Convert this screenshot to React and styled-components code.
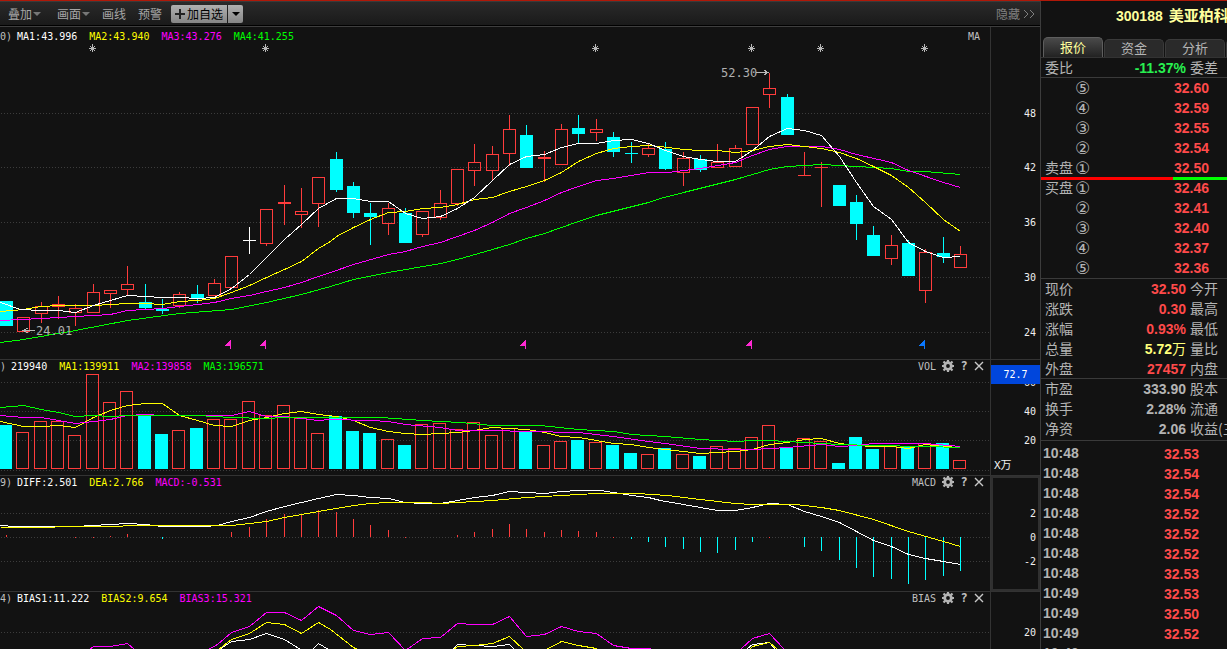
import React from "react";
import styled, { createGlobalStyle } from "styled-components";

const RED = "#ff3c3c";
const CYAN = "#00ffff";
const MAGENTA = "#ff00ff";
const YELLOW = "#ffff00";
const GREEN = "#00ff00";
const MONO = '"DejaVu Sans Mono", "Noto Sans CJK SC", monospace';
const CJK = '"Noto Sans CJK SC", sans-serif';
const BOLD = '"Liberation Sans", "Noto Sans CJK SC", sans-serif';

const GlobalStyle = createGlobalStyle`
  * { box-sizing: border-box; }
  body { margin: 0; background: #121212; overflow: hidden; }
  button { border: 0; padding: 0; background: none; color: inherit; font: inherit; cursor: pointer; }
  table { border-collapse: collapse; table-layout: fixed; width: 100%; }
`;

const Screen = styled.div`
  height: 100vh;
  display: flex;
  flex-direction: column;
  overflow: hidden;
  background: #121212;
  border-top: 1px solid #b01808;
  font-family: ${CJK};
`;

const Body = styled.div`
  flex: 1;
  min-height: 0;
  display: flex;
`;

const ChartColumn = styled.main`
  flex: 1;
  min-width: 0;
  overflow: hidden;
  border-right: 1px solid #3c3c3c;
`;

/* ---------- toolbar ---------- */

const Toolbar = styled.nav`
  height: 26px;
  display: flex;
  align-items: center;
  gap: 9px;
  padding: 0 5px 1px 8px;
  border-top: 1px solid #3a3a3a;
  border-bottom: 1px solid #3e3e3e;
  box-shadow: inset 0 -1px 0 #000;
  background: linear-gradient(#2a2a2a, #191919);
  color: #a6a6a6;
  font-size: 12px;
  line-height: 18px;
`;

const ToolGroup = styled.div`
  display: flex;
  gap: ${(p) => p.$gap}px;
`;

const ToolButton = styled.button`
  display: flex;
  align-items: center;
  padding-right: ${(p) => (p.$menu ? 3 : 0)}px;
  white-space: nowrap;
`;

const Caret = styled.span`
  margin-left: ${(p) => (p.$dark ? 0 : 1)}px;
  border: 4px solid transparent;
  border-top-color: ${(p) => (p.$dark ? "#000" : "#777")};
  border-bottom-width: 0;
`;

const AddGroup = styled.div`
  display: flex;
  gap: 1px;
`;

const AddButton = styled.button`
  height: 18px;
  width: ${(p) => p.$width}px;
  display: flex;
  align-items: center;
  justify-content: center;
  gap: 2px;
  border-radius: ${(p) => (p.$end ? "0 2px 2px 0" : "2px 0 0 2px")};
  background: linear-gradient(#b0b0b0, #868686);
  color: #000;
`;

const HideButton = styled.button`
  margin-left: auto;
  display: flex;
  align-items: center;
  gap: 3px;
  color: #808080;
`;

/* ---------- chart panels ---------- */

const Panel = styled.section`
  height: ${(p) => p.$height}px;
  display: grid;
  grid-template-columns: minmax(0, 1fr) 50px;
  border-top: ${(p) => (p.$first ? 0 : 1)}px solid #333;
`;

const Plot = styled.div`
  position: relative;
  min-width: 0;
`;

const PlotSvg = styled.svg`
  display: block;
  width: 100%;
  height: 100%;
`;

const Axis = styled.div`
  position: relative;
  border-left: 1px solid #333;
  box-shadow: ${(p) => (p.$active ? "inset 0 0 0 2px #303030" : "none")};
`;

const AxisText = styled.text`
  font: 10px ${MONO};
  fill: #f0f0f0;
  text-anchor: end;
`;

const PriceTag = styled.div`
  position: absolute;
  inset: 5px 0 auto 0;
  height: 19px;
  background: #0046dc;
  color: #fff;
  font: 10px/19px ${MONO};
  text-align: center;
`;

const Unit = styled.div`
  position: absolute;
  left: 3px;
  bottom: 0;
  color: #f0f0f0;
  font: 11px/18px ${MONO};
`;

const PanelHead = styled.header`
  position: absolute;
  inset: ${(p) => (p.$first ? 3 : 0)}px 0 auto 0;
  height: 13px;
  padding-right: ${(p) => (p.$first ? 10 : 6)}px;
  display: flex;
  align-items: center;
  color: #c0c0c0;
  font: 10px/13px ${MONO};
  white-space: nowrap;
`;

const Readouts = styled.div`
  display: flex;
  gap: 12px;
  margin-left: 5px;
`;

const Readout = styled.span`
  color: ${(p) => p.$color};
`;

const PanelTools = styled.div`
  margin-left: auto;
  display: flex;
  align-items: flex-start;
  gap: 6px;
`;

const IconButton = styled.button`
  width: ${(p) => p.$width}px;
  height: 12px;
  display: flex;
  align-items: center;
  justify-content: center;
  font: bold 12px/12px ${MONO};
`;

const Callout = styled.span`
  position: absolute;
  color: #b0b0b0;
  font: 12px/14px ${MONO};
`;

/* ---------- quote panel ---------- */

const QuotePanel = styled.aside`
  width: 186px;
  flex: none;
  overflow: hidden;
  color: #b4b4b4;
  font-size: 14px;
`;

const Title = styled.h1`
  margin: 0;
  height: 35px;
  padding: 4px 0 0 75px;
  display: flex;
  gap: 6px;
  color: #ffff9c;
  font: bold 14px/22px ${BOLD};
  white-space: nowrap;
`;

const StockName = styled.span`
  font-size: 15px;
`;

const Tabs = styled.div`
  display: flex;
  align-items: flex-end;
  gap: 1px;
  height: 22px;
  padding-left: 2px;
  border-bottom: 1px solid #333;
`;

const Tab = styled.button`
  flex: none;
  width: 60px;
  height: ${(p) => (p.$active ? 20 : 18)}px;
  padding-bottom: 2px;
  border: 1px solid ${(p) => (p.$active ? "#5e5e5e" : "#3a3a3a")};
  border-bottom: 0;
  border-radius: 5px 5px 0 0;
  background: ${(p) => (p.$active ? "linear-gradient(#4a4a4a, #222)" : "#2a2a2a")};
  color: ${(p) => (p.$active ? "#ffff9c" : "#b4b4b4")};
  font-size: 13px;
  line-height: 15px;
`;

const Section = styled.div`
  padding: ${(p) => p.$top || 0}px 0 ${(p) => p.$bottom || 0}px;
  background: linear-gradient(#3a3a3a, #3a3a3a) bottom / 100% ${(p) => (p.$last ? 0 : 1)}px no-repeat;
`;

const Row = styled.tr`
  height: 20px;
`;

const Label = styled.th`
  width: ${(p) => p.$width};
  padding: 0 0 2px 4px;
  overflow: hidden;
  font-weight: normal;
  line-height: 18px;
  text-align: left;
  white-space: nowrap;
`;

const Value = styled.td`
  width: ${(p) => p.$width};
  padding: 0 ${(p) => p.$right || 0}px 0 0;
  color: ${(p) => p.$color || "#ff4a4a"};
  font: bold 14px/18px ${BOLD};
  text-align: right;
  white-space: nowrap;
`;

const Plain = styled.span`
  font-weight: normal;
`;

const Level = styled.td`
  padding: 0 0 0 1px;
  font: 17px/18px "DejaVu Sans", sans-serif;
`;

const Time = styled.th`
  padding: 0 0 2px 2px;
  font: bold 14px/18px ${BOLD};
  text-align: left;
`;

const Ratio = styled.div`
  position: relative;
  display: flex;
  height: 3px;
  margin: -1px 0 -2px;
  background: #00ff00;
`;

const RatioFill = styled.div`
  width: 132px;
  background: #ff0000;
`;

/* ---------- data ---------- */

const CX = [
  6, 23, 41, 58, 75, 93, 110, 127, 145, 162, 179, 197, 214, 231, 249, 266, 284, 301, 318,
  336, 353, 370, 388, 405, 422, 440, 457, 474, 492, 509, 526, 544, 561, 578, 596, 613, 631, 648,
  665, 683, 700, 717, 735, 752, 769, 787, 804, 821, 839, 856, 873, 891, 908, 925, 943, 960,
];

/* kind (u up, d down, x flat), high, body top, body bottom, low, volume top */
const BARS = [
  ["d", 301, 301, 326, 326, 425], ["u", 317, 317, 332, 332, 432], ["u", 302, 306, 314, 323, 421],
  ["u", 296, 304, 307, 319, 421], ["u", 304, 308, 313, 326, 435], ["u", 284, 292, 313, 313, 374],
  ["u", 290, 290, 294, 308, 402], ["u", 266, 284, 290, 295, 391], ["d", 284, 302, 308, 309, 415],
  ["d", 299, 309, 311, 314, 434], ["u", 292, 294, 306, 308, 430], ["d", 285, 294, 299, 303, 428],
  ["u", 279, 283, 296, 296, 419], ["u", 256, 256, 288, 288, 419], ["x", 227, 240, 241, 254, 401],
  ["u", 209, 209, 244, 246, 415], ["u", 185, 202, 204, 225, 405], ["u", 188, 211, 215, 228, 418],
  ["u", 177, 177, 204, 227, 433], ["d", 152, 159, 190, 192, 416], ["d", 182, 186, 213, 218, 431],
  ["d", 203, 213, 217, 245, 433], ["u", 203, 208, 224, 235, 439], ["d", 208, 213, 243, 243, 445],
  ["u", 211, 211, 235, 237, 424], ["u", 190, 203, 218, 220, 423], ["u", 169, 169, 204, 206, 429],
  ["u", 144, 162, 171, 186, 422], ["u", 146, 154, 171, 180, 435], ["u", 115, 129, 154, 166, 428],
  ["d", 125, 135, 168, 168, 431], ["u", 151, 157, 159, 182, 445], ["u", 124, 129, 165, 165, 441],
  ["d", 115, 128, 134, 143, 440], ["u", 119, 129, 133, 141, 442], ["d", 132, 137, 152, 157, 445],
  ["d", 142, 153, 154, 163, 453], ["u", 143, 148, 155, 157, 454], ["d", 142, 149, 169, 170, 448],
  ["u", 152, 158, 173, 186, 454], ["d", 155, 159, 170, 172, 456], ["u", 144, 162, 168, 168, 446],
  ["u", 145, 148, 167, 167, 448], ["u", 107, 107, 145, 145, 437], ["u", 73, 88, 95, 108, 425],
  ["d", 94, 97, 135, 135, 448], ["u", 152, 175, 176, 176, 438], ["u", 162, 167, 168, 207, 441],
  ["d", 185, 185, 206, 206, 463], ["d", 195, 202, 224, 240, 437], ["d", 226, 235, 256, 256, 449],
  ["u", 235, 245, 259, 265, 446], ["d", 240, 243, 276, 276, 447], ["u", 249, 252, 291, 303, 443],
  ["d", 237, 253, 257, 263, 443], ["u", 246, 254, 268, 268, 460],
];

const MA_LINES = [
  [GREEN, "0,342 23,339 75,330 127,320 179,313 231,309 266,302 301,294 330,286 353,279 388,272 440,263 457,259 492,249 509,244 526,238 544,233 578,221 596,215 648,202 660,198 683,192 735,179 769,169 787,166 821,164 839,165 891,168 908,171 925,171 960,174"],
  [MAGENTA, "0,320 41,318 75,316 110,314 127,310 162,308 179,306 197,304 214,302 231,298 249,295 266,291 284,287 301,282 318,276 330,272 353,264 388,254 405,251 422,246 440,242 474,230 492,222 509,213 526,207 544,200 561,192 578,186 596,180 613,178 648,172 667,172 700,168 735,162 752,155 769,149 787,146 821,146 839,149 856,154 891,162 908,170 943,182 960,187"],
  [YELLOW, "0,311 23,309 41,306 58,305 93,305 110,304 127,303 145,303 162,304 179,301 197,300 214,298 231,292 249,285 266,277 284,269 301,261 318,248 330,241 336,236 353,227 370,219 388,212 405,211 422,208 440,207 457,204 474,199 492,197 509,191 526,186 544,180 561,172 578,161 596,153 613,148 631,146 648,145 660,146 683,149 700,150 717,150 735,152 752,150 769,146 787,144 804,146 821,148 839,152 856,158 873,166 891,175 908,187 925,202 943,219 960,231"],
  ["#fff", "0,302 20,309 41,310 58,310 75,312 93,305 110,300 127,295 145,296 162,297 179,297 197,298 214,297 231,288 249,274 266,257 284,239 301,224 318,208 336,198 353,198 370,201 388,201 405,213 422,218 440,216 457,208 474,197 492,180 509,164 526,156 544,154 561,147 578,143 596,143 613,140 631,139 648,143 665,150 683,156 700,159 717,161 735,161 752,150 769,136 787,128 804,130 821,135 839,156 856,182 873,206 891,219 908,242 925,251 943,257 960,256"],
];

const VOL_LINES = [
  [YELLOW, "0,421 23,426 41,426 58,425 75,427 93,417 110,410 127,405 145,403 162,403 179,415 197,420 214,425 231,426 249,420 266,417 284,413 301,411 318,414 336,416 353,420 370,427 388,431 405,433 422,434 440,433 457,432 474,430 492,427 509,428 526,429 544,432 561,436 578,437 596,440 613,443 631,444 648,447 665,449 683,451 700,453 717,452 735,451 752,449 769,444 787,442 804,439 821,438 839,443 856,445 873,446 891,446 908,448 925,444 943,446 960,447"],
  [MAGENTA, "0,415 23,417 41,417 58,420 75,423 93,421 110,419 127,415 145,414 162,415 231,415 249,411 266,416 284,416 301,418 318,420 330,419 370,420 388,421 405,424 440,427 457,430 492,430 526,431 578,432 613,436 648,441 665,443 700,448 735,449 752,449 787,447 821,444 839,446 856,445 873,443 925,443 960,446"],
  [GREEN, "0,407 23,405 41,409 58,412 75,416 93,415 110,416 127,415 197,415 231,417 266,418 284,417 380,417 422,420 460,422 492,425 540,425 578,429 613,431 631,434 665,436 700,439 735,441 752,440 769,440 804,442 839,444 873,445 925,446 960,447"],
];

const MACD_LINES = [
  ["#fff", "0,525 15,526 75,526 127,523 145,524 162,526 205,526 217,525 231,521 249,517 266,511 284,506 301,502 318,498 336,494 353,495 370,497 388,498 405,502 422,503 440,503 457,500 474,497 492,495 509,491 526,492 544,493 561,491 578,490 600,490 613,492 631,495 648,497 660,500 683,504 700,507 717,510 735,510 752,507 769,503 787,504 804,511 821,516 839,522 856,531 873,540 891,546 908,554 925,558 943,561 960,564"],
  [YELLOW, "0,527 50,527 60,526 118,526 127,525 231,525 249,523 266,521 284,517 301,514 318,511 336,508 353,505 370,503 388,502 422,502 440,503 457,502 492,500 526,497 561,495 596,493 637,493 667,495 700,499 735,503 752,504 795,504 821,507 839,510 873,519 908,531 943,541 960,546"],
];

const MACD_BARS = [
  [6, 535], [75, 537], [93, 537], [110, 536], [127, 534], [162, 539], [231, 532], [249, 527], [266, 519],
  [284, 514], [301, 514], [318, 510], [336, 512], [353, 519], [370, 525], [388, 530], [405, 537],
  [457, 535], [474, 532], [492, 529], [509, 524], [526, 529], [544, 532], [561, 530], [578, 531],
  [596, 532], [613, 537], [631, 539], [648, 542], [665, 547], [683, 549], [700, 552], [717, 553],
  [735, 550], [752, 542], [769, 537], [804, 547], [821, 551], [839, 560], [856, 568], [873, 577],
  [891, 579], [908, 584], [925, 580], [943, 576], [960, 571],
];

const BIAS_LINES = [
  ["#fff", "219,649 231,641 249,639 266,633 284,639 300,649 312,649 318,643 328,649 340,660 440,660 452,649 457,644 474,645 492,646 509,644 514,649 530,660 730,660 746,649 752,644 769,642 775,649 785,660"],
  [YELLOW, "218,649 231,639 249,633 266,622 284,624 301,633 318,622 330,629 353,647 357,649 370,660 440,660 453,649 457,646 474,645 492,643 509,636 523,649 535,660 546,649 561,641 578,645 596,648 599,650 620,660 730,660 749,649 752,646 769,642 777,649 790,660"],
  [MAGENTA, "82,655 93,646 110,646 127,643 134,649 145,660 195,660 208,649 217,644 231,632 249,626 266,612 284,612 301,620 318,606 336,615 353,630 370,634 388,632 405,650 422,638 440,637 457,623 474,624 492,624 509,616 526,636 544,634 561,626 578,631 596,633 613,645 631,648 650,648 665,660 725,660 740,649 752,638 769,633 784,649 795,660"],
];

const PANELS = [
  {
    id: "price", top: 27, height: 332, name: "MA", prefix: "0)", ticks: [[113, "48"], [167, "42"], [222, "36"], [277, "30"], [332, "24"]],
    lines: MA_LINES,
    readouts: [["MA1:43.996", "#fff"], ["MA2:43.940", YELLOW], ["MA3:43.276", MAGENTA], ["MA4:41.255", GREEN]],
  },
  {
    id: "vol", top: 360, height: 116, name: "VOL", prefix: ")", ticks: [[382, "60"], [411, "40"], [440, "20"], [470, ""]],
    lines: VOL_LINES,
    readouts: [["219940", "#fff"], ["MA1:139911", YELLOW], ["MA2:139858", MAGENTA], ["MA3:196571", GREEN]],
  },
  {
    id: "macd", top: 476, height: 116, name: "MACD", prefix: "9)", ticks: [[513, "2"], [537, "0"], [561, "-2"]],
    lines: MACD_LINES,
    readouts: [["DIFF:2.501", "#fff"], ["DEA:2.766", YELLOW], ["MACD:-0.531", MAGENTA]],
  },
  {
    id: "bias", top: 592, height: 116, name: "BIAS", prefix: "4)", ticks: [[632, "20"]],
    lines: BIAS_LINES,
    readouts: [["BIAS1:11.222", "#fff"], ["BIAS2:9.654", YELLOW], ["BIAS3:15.321", MAGENTA]],
  },
];

const STARS = [92, 265, 595, 751, 820, 924];
const FLAGS = [[230, "#ff28d2"], [265, "#ff28d2"], [525, "#ff28d2"], [751, "#ff28d2"], [924, "#0a78ff"]];

const SELL = [["", "⑤", "32.60"], ["", "④", "32.59"], ["", "③", "32.55"], ["", "②", "32.54"], ["卖盘", "①", "32.50"]];
const BUY = [["买盘", "①", "32.46"], ["", "②", "32.41"], ["", "③", "32.40"], ["", "④", "32.37"], ["", "⑤", "32.36"]];
const QUOTE = [
  ["现价", "32.50", "今开"], ["涨跌", "0.30", "最高"], ["涨幅", "0.93%", "最低"],
  ["总量", "5.72", "量比", "#ffff7a", "万"], ["外盘", "27457", "内盘"],
];
const FUNDAMENTALS = [
  ["市盈", "333.90", "股本", "#b4b4b4"], ["换手", "2.28%", "流通", "#b4b4b4"], ["净资", "2.06", "收益(三)", "#b4b4b4"],
];
const TRADES = [
  ["10:48", "32.53"], ["10:48", "32.54"], ["10:48", "32.54"], ["10:48", "32.52"], ["10:48", "32.52"],
  ["10:48", "32.52"], ["10:48", "32.53"], ["10:49", "32.53"], ["10:49", "32.50"], ["10:49", "32.52"], ["10:49", "32.52"],
];

/* ---------- drawings ---------- */

function Box({ up, x, top, bottom }) {
  if (!up || bottom - top < 3) {
    return <rect x={x} y={top} width="13" height={bottom - top} fill={up ? RED : CYAN} />;
  }
  return <rect x={x + 0.5} y={top + 0.5} width="12" height={bottom - top - 1} fill="none" stroke={RED} />;
}

function Candle({ x, bar }) {
  const [kind, high, top, bottom, low] = bar;
  const color = kind === "u" ? RED : kind === "d" ? CYAN : "#fff";
  return (
    <g fill={color}>
      <rect x={x} y={high} width="1" height={top - high} />
      <rect x={x} y={bottom} width="1" height={low - bottom} />
      {kind === "x" ? <rect x={x - 6} y={top} width="13" height="1" /> : <Box up={kind === "u"} x={x - 6} top={top} bottom={bottom} />}
    </g>
  );
}

function Star({ x }) {
  return (
    <path
      d={`M${x + 0.5} 44v8M${x - 3} 48.5h7M${x - 2} 46l5 5M${x + 3} 46l-5 5`}
      stroke="#b8b8b8"
      fill="none"
      shapeRendering="auto"
    />
  );
}

function Flag({ x, color }) {
  return <path d={`M${x + 1} 340v9h-1v-3h-5v-1l5-5z`} fill={color} />;
}

function Marks({ id }) {
  if (id === "price") {
    return (
      <>
        {BARS.map((b, i) => <Candle key={CX[i]} x={CX[i]} bar={b} />)}
        {STARS.map((x) => <Star key={x} x={x} />)}
        {FLAGS.map(([x, c]) => <Flag key={x} x={x} color={c} />)}
        <path d="M756 72.5h12M764 70l4 2.5-4 2.5M23 330.5h12M28 328l-5 2.5 5 2.5" stroke="#b8b8b8" fill="none" />
      </>
    );
  }
  if (id === "vol") {
    return BARS.map((b, i) => <Box key={CX[i]} up={b[0] !== "d"} x={CX[i] - 7} top={b[5]} bottom={469} />);
  }
  if (id === "macd") {
    return MACD_BARS.map(([x, y]) => (
      <rect key={x} x={x} y={Math.min(y, 537)} width="1" height={Math.max(1, Math.abs(y - 537))} fill={y > 537 ? CYAN : RED} />
    ));
  }
  return null;
}

function Gear() {
  return (
    <svg width="12" height="12" viewBox="0 0 12 12" aria-hidden="true">
      <circle cx="6" cy="6" r="3.3" fill="none" stroke="#b4b4b4" strokeWidth="2.8" />
      <path d="M6 0v2M6 10v2M0 6h2M10 6h2M1.5 1.5l1.6 1.6M8.9 8.9l1.6 1.6M10.5 1.5L8.9 3.1M3.1 8.9l-1.6 1.6" stroke="#b4b4b4" strokeWidth="2.2" />
    </svg>
  );
}

function ChartPanel({ panel }) {
  const first = panel.id === "price";
  const inner = first ? panel.height : panel.height - 1;
  return (
    <Panel $height={panel.height} $first={first}>
      <Plot>
        <PlotSvg viewBox={`0 ${panel.top} 990 ${inner}`} preserveAspectRatio="none" shapeRendering="crispEdges">
          {panel.ticks.map(([y]) => (
            <path key={y} d={`M1 ${y + 0.5}H990`} stroke="#3c3c3c" strokeDasharray="1 2" />
          ))}
          <Marks id={panel.id} />
          {panel.lines.map(([color, points]) => (
            <polyline key={color} points={points} fill="none" stroke={color} transform="translate(0.5 0.5)" />
          ))}
        </PlotSvg>
        {first && (
          <>
            <Callout style={{ left: `${(721 / 990) * 100}%`, top: 66 - panel.top }}>52.30</Callout>
            <Callout style={{ left: `${(36 / 990) * 100}%`, top: 324 - panel.top }}>24.01</Callout>
          </>
        )}
        <PanelHead $first={first}>
          {panel.prefix}
          <Readouts>
            {panel.readouts.map(([text, color]) => <Readout key={text} $color={color}>{text}</Readout>)}
          </Readouts>
          <PanelTools>
            <span>{panel.name}</span>
            {!first && (
              <>
                <IconButton $width={12} aria-label="设置"><Gear /></IconButton>
                <IconButton $width={8}>?</IconButton>
                <IconButton $width={10} aria-label="关闭">
                  <svg width="10" height="10" viewBox="0 0 10 10" aria-hidden="true">
                    <path d="M1 1l8 8M9 1L1 9" stroke="#c8c8c8" strokeWidth="1.4" />
                  </svg>
                </IconButton>
              </>
            )}
          </PanelTools>
        </PanelHead>
      </Plot>
      <Axis $active={panel.id === "macd"}>
        <svg width="49" height={inner} viewBox={`0 ${panel.top} 49 ${inner}`} display="block">
          {panel.ticks.map(([y, label]) => <AxisText key={y} x="45" y={y + 4}>{label}</AxisText>)}
        </svg>
        {panel.id === "vol" && (
          <>
            <PriceTag>72.7</PriceTag>
            <Unit>X万</Unit>
          </>
        )}
      </Axis>
    </Panel>
  );
}

function Book({ rows }) {
  return (
    <table>
      <tbody>
        {rows.map(([side, level, price]) => (
          <Row key={level}>
            <Label scope="row" $width="33px">{side}</Label>
            <Level>{level}</Level>
            <Value $right={18}>{price}</Value>
          </Row>
        ))}
      </tbody>
    </table>
  );
}

function Stats({ rows }) {
  return (
    <table>
      <tbody>
        {rows.map(([label, value, next, color, unit]) => (
          <Row key={label}>
            <Label scope="row" $width="40px">{label}</Label>
            <Value $width="105px" $color={color}>{value}{unit && <Plain>{unit}</Plain>}</Value>
            <Label scope="row" $width="41px">{next}</Label>
          </Row>
        ))}
      </tbody>
    </table>
  );
}

export default function App() {
  return (
    <Screen>
      <GlobalStyle />
      <Body>
        <ChartColumn>
          <Toolbar>
            <ToolGroup $gap={13}>
              <ToolButton $menu>叠加<Caret /></ToolButton>
              <ToolButton $menu>画面<Caret /></ToolButton>
            </ToolGroup>
            <ToolGroup $gap={12}>
              <ToolButton>画线</ToolButton>
              <ToolButton>预警</ToolButton>
            </ToolGroup>
            <AddGroup>
              <AddButton $width={56}>
                <svg width="10" height="10" viewBox="0 0 10 10" aria-hidden="true">
                  <path d="M5 0v10M0 5h10" stroke="#222" strokeWidth="2" />
                </svg>
                加自选
              </AddButton>
              <AddButton $width={15} $end aria-label="更多"><Caret $dark /></AddButton>
            </AddGroup>
            <HideButton>
              隐藏
              <svg width="12" height="10" viewBox="0 0 12 10" aria-hidden="true">
                <path d="M1 1l4 4-4 4M7 1l4 4-4 4" fill="none" stroke="#808080" />
              </svg>
            </HideButton>
          </Toolbar>
          {PANELS.map((p) => <ChartPanel key={p.id} panel={p} />)}
        </ChartColumn>
        <QuotePanel>
          <Title>300188 <StockName>美亚柏科</StockName></Title>
          <Tabs>
            <Tab $active>报价</Tab>
            <Tab>资金</Tab>
            <Tab>分析</Tab>
            <Tab aria-label="更多" />
          </Tabs>
          <Section>
            <Stats rows={[["委比", "-11.37%", "委差", "#28f050"]]} />
          </Section>
          <Section $bottom={1}>
            <Book rows={SELL} />
            <Ratio><RatioFill /></Ratio>
            <Book rows={BUY} />
          </Section>
          <Section>
            <Stats rows={QUOTE} />
          </Section>
          <Section $bottom={2}>
            <Stats rows={FUNDAMENTALS} />
          </Section>
          <Section $last $top={3}>
            <table>
              <tbody>
                {TRADES.map(([time, price], i) => (
                  <Row key={i}>
                    <Time scope="row">{time}</Time>
                    <Value $right={28}>{price}</Value>
                  </Row>
                ))}
              </tbody>
            </table>
          </Section>
        </QuotePanel>
      </Body>
    </Screen>
  );
}
